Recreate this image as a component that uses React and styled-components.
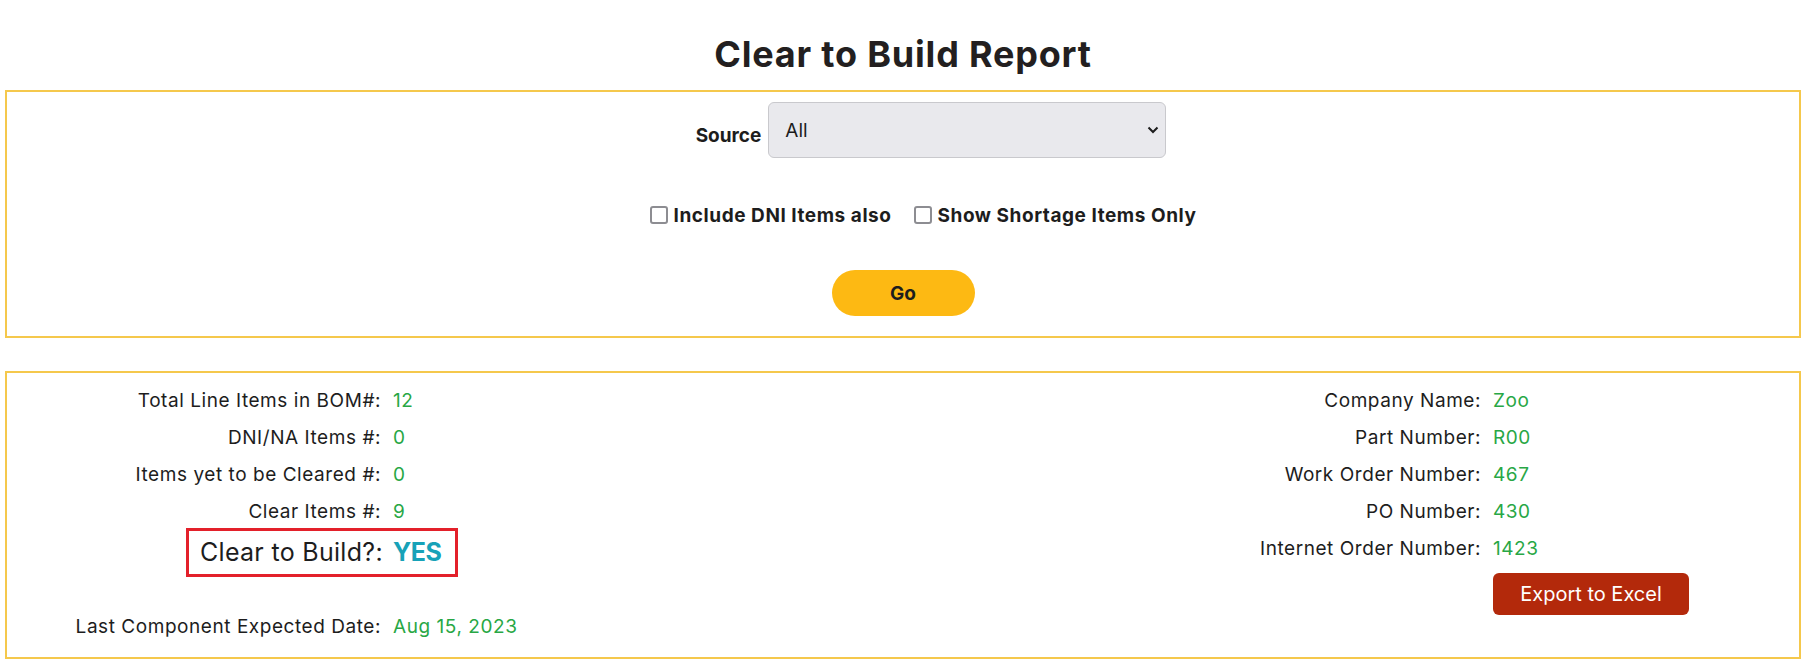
import React from 'react';
import styled, { createGlobalStyle } from 'styled-components';

const GlobalStyle = createGlobalStyle`
  body {
    margin: 0;
    background: #ffffff;
    font-family: Inter, "Open Sans", sans-serif;
    color: #1d1d1d;
  }
`;

const Page = styled.div`
  padding: 0 6px 8px 5px;
`;

const Title = styled.h2`
  margin: 0 0 14px;
  padding-top: 32px;
  text-align: center;
  font-size: 36px;
  line-height: 44px;
  font-weight: 700;
  letter-spacing: 0.8px;
  color: #231f20;
`;

const Panel = styled.section`
  border: 2px solid #f5c84c;
  padding: ${props => props.$pad};
  margin-bottom: ${props => props.$gap || 0}px;
`;

const SourceRow = styled.div`
  display: flex;
  justify-content: center;
  align-items: flex-start;
  gap: 7px;
  padding-left: 56px;
`;

const FieldLabel = styled.label`
  margin-top: 23px;
  font-size: 19px;
  line-height: 22px;
  font-weight: 700;
`;

const SelectWrap = styled.div`
  position: relative;
  width: 398px;
  height: 56px;
`;

const Select = styled.select`
  appearance: none;
  width: 100%;
  height: 100%;
  box-sizing: border-box;
  padding: 0 30px 0 16px;
  background: #e9e9ed;
  border: 1px solid #c9c9cd;
  border-radius: 6px;
  font-family: Inter, "Open Sans", sans-serif;
  font-size: 19px;
  color: #1d1d1d;
`;

const Chevron = styled.svg`
  position: absolute;
  right: 7px;
  top: 50%;
  transform: translateY(-50%);
  pointer-events: none;
`;

const CheckRow = styled.div`
  display: flex;
  justify-content: center;
  align-items: center;
  gap: 22px;
  height: 26px;
  margin-top: 44px;
  padding-left: 40px;
`;

const CheckLabel = styled.label`
  display: flex;
  align-items: center;
  gap: 6px;
  font-size: 19px;
  font-weight: 700;
  letter-spacing: 0.55px;
`;

const Box = styled.input`
  appearance: none;
  margin: 0;
  width: 18px;
  height: 18px;
  box-sizing: border-box;
  border: 2px solid #8d8d92;
  border-radius: 3px;
  background: #fff;
`;

const GoRow = styled.div`
  display: flex;
  justify-content: center;
  margin-top: 42px;
`;

const GoButton = styled.button`
  width: 143px;
  height: 46px;
  border: none;
  border-radius: 23px;
  background: #fdb913;
  font-family: Inter, "Open Sans", sans-serif;
  font-size: 19px;
  font-weight: 700;
  color: #1d1d1d;
`;

const Summary = styled.div`
  display: flex;
  justify-content: space-between;
  align-items: flex-start;
`;

const Column = styled.div`
  display: flex;
  flex-direction: column;
  align-items: flex-start;
  margin-right: ${props => props.$right || 0}px;
`;

const Row = styled.div`
  display: grid;
  grid-template-columns: ${props => props.$labelWidth}px auto;
  column-gap: 12px;
  font-size: 19px;
  line-height: 37px;
  letter-spacing: 0.55px;
  margin-top: ${props => props.$top || 0}px;
`;

const Label = styled.span`
  text-align: right;
  white-space: nowrap;
`;

const Value = styled.span`
  color: #28a745;
  white-space: nowrap;
`;

const Highlight = styled.div`
  display: flex;
  gap: 10px;
  margin: -2px 0 0 179px;
  padding: 0 13px 0 11px;
  border: 3px solid #e3202a;
  font-size: 25px;
  line-height: 43px;
  letter-spacing: 0.3px;
`;

const Verdict = styled.span`
  color: #17a2b8;
  font-weight: 700;
  letter-spacing: -0.4px;
`;

const ExportButton = styled.button`
  width: 196px;
  height: 42px;
  margin-top: 6px;
  border: none;
  border-radius: 6px;
  background: #b3290b;
  color: #ffffff;
  font-family: Inter, "Open Sans", sans-serif;
  font-size: 20px;
`;

const leftRows = [
  ['Total Line Items in BOM#:', '12'],
  ['DNI/NA Items #:', '0'],
  ['Items yet to be Cleared #:', '0'],
  ['Clear Items #:', '9'],
];

const rightRows = [
  ['Company Name:', 'Zoo'],
  ['Part Number:', 'R00'],
  ['Work Order Number:', '467'],
  ['PO Number:', '430'],
  ['Internet Order Number:', '1423'],
];

const App = () => {
  return (
    <Page>
      <GlobalStyle />
      <Title>Clear to Build Report</Title>

      <Panel $pad="10px 0 20px" $gap={33}>
        <SourceRow>
          <FieldLabel htmlFor="source">Source</FieldLabel>
          <SelectWrap>
            <Select id="source" defaultValue="All">
              <option>All</option>
            </Select>
            <Chevron width="12" height="8" viewBox="0 0 12 8">
              <polyline points="1.5,1.5 6,6 10.5,1.5" fill="none" stroke="#1d1d1d" strokeWidth="2" />
            </Chevron>
          </SelectWrap>
        </SourceRow>

        <CheckRow>
          <CheckLabel>
            <Box type="checkbox" />
            Include DNI Items also
          </CheckLabel>
          <CheckLabel>
            <Box type="checkbox" />
            Show Shortage Items Only
          </CheckLabel>
        </CheckRow>

        <GoRow>
          <GoButton>Go</GoButton>
        </GoRow>
      </Panel>

      <Panel $pad="9px 0 12px">
        <Summary>
          <Column>
            {leftRows.map(([label, value]) => (
              <Row key={label} $labelWidth={374}>
                <Label>{label}</Label>
                <Value>{value}</Value>
              </Row>
            ))}
            <Highlight>
              <span>Clear to Build?:</span>
              <Verdict>YES</Verdict>
            </Highlight>
            <Row $labelWidth={374} $top={31}>
              <Label>Last Component Expected Date:</Label>
              <Value>Aug 15, 2023</Value>
            </Row>
          </Column>

          <Column $right={110}>
            {rightRows.map(([label, value]) => (
              <Row key={label} $labelWidth={230}>
                <Label>{label}</Label>
                <Value>{value}</Value>
              </Row>
            ))}
            <Row $labelWidth={230}>
              <span />
              <ExportButton>Export to Excel</ExportButton>
            </Row>
          </Column>
        </Summary>
      </Panel>
    </Page>
  );
};

export default App;
